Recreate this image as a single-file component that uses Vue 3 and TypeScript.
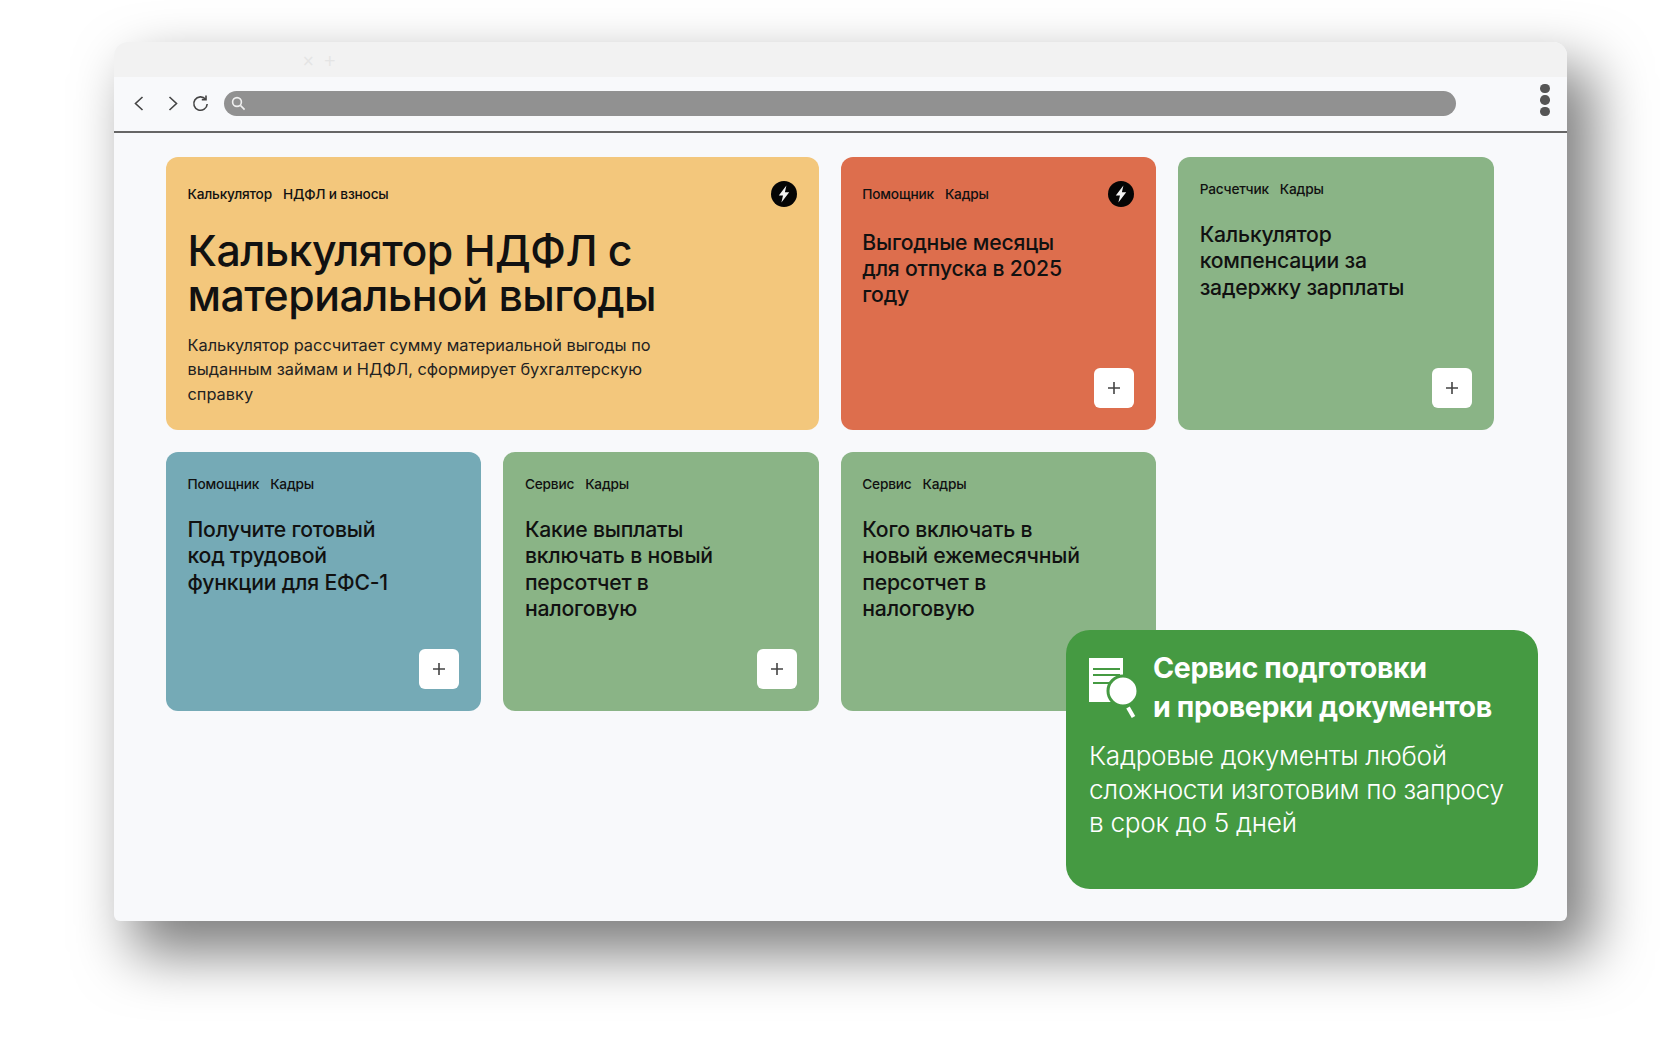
<script setup lang="ts">
interface Card {
  tags: string[]
  title: string[]
  color: string
  bolt?: boolean
  plus?: boolean
}
const cards: Card[] = [
  { tags: ['Помощник', 'Кадры'], title: ['Выгодные месяцы', 'для отпуска в 2025', 'году'], color: 'orange', bolt: true, plus: true },
  { tags: ['Расчетчик', 'Кадры'], title: ['Калькулятор', 'компенсации за', 'задержку зарплаты'], color: 'green', plus: true },
  { tags: ['Помощник', 'Кадры'], title: ['Получите готовый', 'код трудовой', 'функции для ЕФС-1'], color: 'blue', plus: true },
  { tags: ['Сервис', 'Кадры'], title: ['Какие выплаты', 'включать в новый', 'персотчет в', 'налоговую'], color: 'green', plus: true },
  { tags: ['Сервис', 'Кадры'], title: ['Кого включать в', 'новый ежемесячный', 'персотчет в', 'налоговую'], color: 'green' },
]
</script>

<template>
  <div class="page">
    <div class="browser">
      <div class="tabbar">
        <span class="tabmark">×</span>
        <span class="tabmark">+</span>
      </div>
      <div class="toolbar">
        <svg class="nav" width="10" height="15" viewBox="0 0 10 15"><path d="M8.5 1 1.5 7.5 8.5 14" /></svg>
        <svg class="nav fwd" width="10" height="15" viewBox="0 0 10 15"><path d="M1.5 1 8.5 7.5 1.5 14" /></svg>
        <svg class="nav reload" width="17" height="17" viewBox="0 0 17 17"><path d="M13.6 4.2A6.7 6.7 0 1 0 15.2 9" /><path d="M9.8 4.6h4.2V.6" /></svg>
        <div class="address">
          <svg width="15" height="15" viewBox="0 0 15 15"><circle cx="6" cy="6" r="4.4" /><path d="M9.4 9.4 13.6 13.6" /></svg>
        </div>
        <div class="dots"><i></i><i></i><i></i></div>
      </div>
      <div class="content">
        <div class="grid">
          <article class="card yellow big">
            <div class="head">
              <div class="tags"><span>Калькулятор</span><span>НДФЛ и взносы</span></div>
              <svg class="bolt" width="26" height="26" viewBox="0 0 26 26"><circle cx="13" cy="13" r="13" fill="#050505" /><path d="M15.4 4.5 7.8 14.6h4.2l-1.6 6.9 7.8-10.2h-4.3z" fill="#f4f4f4" /></svg>
            </div>
            <h1>Калькулятор НДФЛ с<br />материальной выгоды</h1>
            <p>Калькулятор рассчитает сумму материальной выгоды по<br />выданным займам и НДФЛ, сформирует бухгалтерскую<br />справку</p>
          </article>
          <article v-for="(c, i) in cards" :key="i" class="card" :class="[c.color, { hasbolt: c.bolt }]">
            <div class="head">
              <div class="tags"><span v-for="t in c.tags" :key="t">{{ t }}</span></div>
              <svg v-if="c.bolt" class="bolt" width="26" height="26" viewBox="0 0 26 26"><circle cx="13" cy="13" r="13" fill="#050505" /><path d="M15.4 4.5 7.8 14.6h4.2l-1.6 6.9 7.8-10.2h-4.3z" fill="#f4f4f4" /></svg>
            </div>
            <h2><template v-for="(l, j) in c.title" :key="j">{{ l }}<br /></template></h2>
            <button v-if="c.plus" class="plus" type="button">
              <svg width="12" height="12" viewBox="0 0 12 12"><path d="M6 0v12M0 6h12" /></svg>
            </button>
          </article>
        </div>
      </div>
      <aside class="promo">
        <div class="promo-head">
          <svg width="50" height="62" viewBox="0 0 50 62">
            <path d="M0 0h34v44H0z" fill="#fff" />
            <path d="M4 11h27M4 17h27M4 25h22" stroke="#459a42" stroke-width="2" fill="none" />
            <circle cx="34" cy="33" r="15" fill="#fff" stroke="#459a42" stroke-width="3" />
            <path d="M39 49.5 44.5 59" stroke="#fff" stroke-width="4" fill="none" />
          </svg>
          <h3>Сервис подготовки<br />и проверки документов</h3>
        </div>
        <p>Кадровые документы любой<br />сложности изготовим по запросу<br />в срок до 5 дней</p>
      </aside>
    </div>
  </div>
</template>

<style scoped>
.page {
  width: 1680px;
  height: 1057px;
  box-sizing: border-box;
  padding: 42px 0 0 114px;
  background: #fff;
  overflow: hidden;
  font-family: Inter, "Noto Sans", sans-serif;
  color: #111;
}
.browser {
  position: relative;
  width: 1453px;
  height: 879px;
  display: flex;
  flex-direction: column;
  background: #f8f9fb;
  border-radius: 14px 14px 6px 6px;
  box-shadow: 22px 29px 56px 4px rgba(0, 0, 0, 0.5);
}
.tabbar {
  height: 35px;
  flex: none;
  background: #f2f2f2;
  border-radius: 14px 14px 0 0;
  display: flex;
  align-items: center;
  gap: 9px;
  padding: 3px 0 0 188px;
  box-sizing: border-box;
}
.tabmark {
  font-size: 15px;
  color: #e4e4e4;
  font-family: "DejaVu Sans", sans-serif;
}
.toolbar {
  height: 56px;
  flex: none;
  box-sizing: border-box;
  display: flex;
  align-items: center;
  padding: 0 0 1px 20px;
  border-bottom: 2px solid #666;
  border-radius: 10px 10px 0 0;
  background: #f8f9fb;
}
.nav {
  fill: none;
  stroke: #444;
  stroke-width: 1.6;
}
.fwd {
  margin-left: 24px;
}
.reload {
  margin-left: 14px;
}
.address {
  margin-left: 15px;
  width: 1232px;
  height: 25px;
  border-radius: 13px;
  background: #919191;
  display: flex;
  align-items: center;
  padding-left: 7px;
  box-sizing: border-box;
}
.address svg {
  fill: none;
  stroke: #f0f0f0;
  stroke-width: 1.6;
}
.dots {
  margin-left: 84px;
  margin-bottom: 7px;
  display: flex;
  flex-direction: column;
  gap: 2px;
}
.dots i {
  display: block;
  width: 9.5px;
  height: 9.5px;
  border-radius: 50%;
  background: #555;
}
.content {
  flex: 1;
  padding: 24px 0 0 52px;
}
.grid {
  width: 1327.6px;
  display: grid;
  grid-template-columns: repeat(4, 315.4px);
  grid-template-rows: 273px 259px;
  gap: 22px;
}
.card {
  position: relative;
  border-radius: 12px;
  padding: 24px 22px 22px 21.5px;
  box-sizing: border-box;
  display: flex;
  flex-direction: column;
  min-width: 0;
}
.big {
  grid-column: span 2;
}
.yellow { background: #f3c77c; }
.orange { background: #dd6e4d; }
.green { background: #8ab486; }
.blue { background: #75aab6; }
.head {
  display: flex;
  justify-content: space-between;
  align-items: center;
}
.tags {
  display: flex;
  gap: 11px;
  font-size: 13.7px;
  line-height: 16px;
  font-weight: 550;
  letter-spacing: -0.2px;
}
h1 {
  margin: 21px 0 0;
  font-size: 42.8px;
  line-height: 45px;
  font-weight: 550;
  letter-spacing: -0.5px;
}
.big p {
  margin: 15px 0 0;
  font-size: 16.35px;
  line-height: 24.3px;
  font-weight: 400;
  color: #222;
}
h2 {
  margin: 24px 0 0;
  font-size: 21.2px;
  line-height: 26.3px;
  font-weight: 550;
  letter-spacing: -0.2px;
}
.hasbolt h2 {
  margin-top: 21.5px;
}
.plus {
  position: absolute;
  right: 22px;
  bottom: 22px;
  width: 40px;
  height: 40px;
  border: 0;
  padding: 0;
  border-radius: 6px;
  background: #fff;
  display: flex;
  align-items: center;
  justify-content: center;
}
.plus svg {
  fill: none;
  stroke: #444;
  stroke-width: 1.6;
}
.promo {
  position: absolute;
  left: 952px;
  top: 588px;
  width: 472px;
  height: 259px;
  box-sizing: border-box;
  padding: 28px 24px 0 23px;
  border-radius: 24px;
  background: #459a42;
  color: #fff;
}
.promo-head {
  display: flex;
  gap: 14px;
}
.promo h3 {
  margin: -9px 0 0;
  font-size: 28.6px;
  line-height: 38.5px;
  font-weight: 700;
  letter-spacing: -0.4px;
}
.promo p {
  margin: 13px 0 0;
  font-size: 26.2px;
  line-height: 33.7px;
  font-weight: 300;
  letter-spacing: -0.3px;
}
</style>

<style>
body { background: #fff; }
</style>
